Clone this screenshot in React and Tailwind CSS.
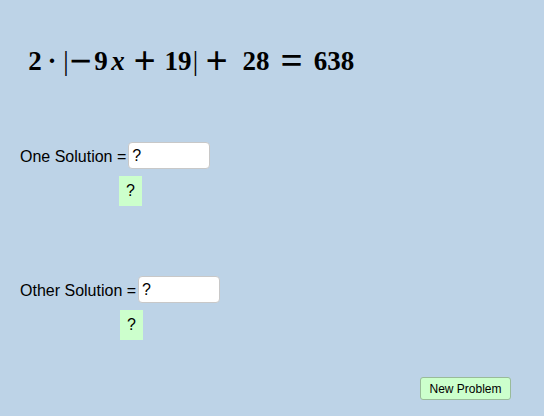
import React from 'react';

const sans = { fontFamily: '"Liberation Sans", Arial, sans-serif' };
const serif = { fontFamily: '"Liberation Serif", "Times New Roman", serif' };

// pieces of the equation, each in a box so the spacing follows the typeset original
const tokens = [
  { t: '2', w: 'w-[14px]' },
  { t: '·', w: 'w-[20px]' },
  { t: '|', w: 'w-[8px]', thin: true },
  { t: '−', w: 'w-[22px]', op: true },
  { t: '9', w: 'w-[18px]' },
  { t: 'x', w: 'w-[16px]', it: true },
  { t: '+', w: 'w-[38px]', op: true },
  { t: '19', w: 'w-[28px]' },
  { t: '|', w: 'w-[7px]', thin: true },
  { t: '+', w: 'w-[36px]', op: true },
  { t: '28', w: 'w-[42px]' },
  { t: '=', w: 'w-[29px]', op: true },
  { t: '638', w: 'w-[56px]' },
];

const Answer = ({ label, boxLeft }) => (
  <>
    <div className="flex items-center h-[27px]">
      <span className="pt-[3px] text-[16px] text-black leading-none" style={sans}>{label}</span>
      <div className="ml-[2px] w-[82px] h-[27px] bg-white border border-[#c8c8c8] rounded-[4px] flex items-center pl-[3px] text-[16px] text-black" style={sans}>?</div>
    </div>
    <div className={`mt-[7px] w-[23px] h-[30px] bg-[#ccffcc] flex items-center justify-center text-[16px] text-black ${boxLeft}`} style={sans}>?</div>
  </>
);

export default function App() {
  return (
    <div className="w-[544px] h-[416px] bg-[#bdd3e7] flex flex-col overflow-hidden">
      <div className="mt-[46px] ml-[28px] h-[30px] flex items-center whitespace-nowrap text-black font-bold text-[27px] leading-[30px]" style={serif}>
        {tokens.map((k, i) => (
          <span key={i} className={`${k.w} h-[30px] flex justify-center`}>
            <span className={`inline-block ${k.op ? 'scale-[1.45]' : ''} ${k.it ? 'italic' : ''} ${k.thin ? 'font-normal' : ''}`}>
              {k.t}
            </span>
          </span>
        ))}
      </div>
      <div className="pl-[20px] flex flex-col">
        <div className="mt-[66px]">
          <Answer label="One Solution =" boxLeft="ml-[99px]" />
        </div>
        <div className="mt-[70px]">
          <Answer label="Other Solution =" boxLeft="ml-[100px]" />
        </div>
      </div>
      <button
        className="mt-[37px] self-end mr-[33px] w-[91px] h-[23px] bg-[#ccffcc] border border-[#99bb99] rounded-[3px] text-[12px] text-black"
        style={sans}
      >
        New Problem
      </button>
    </div>
  );
}
